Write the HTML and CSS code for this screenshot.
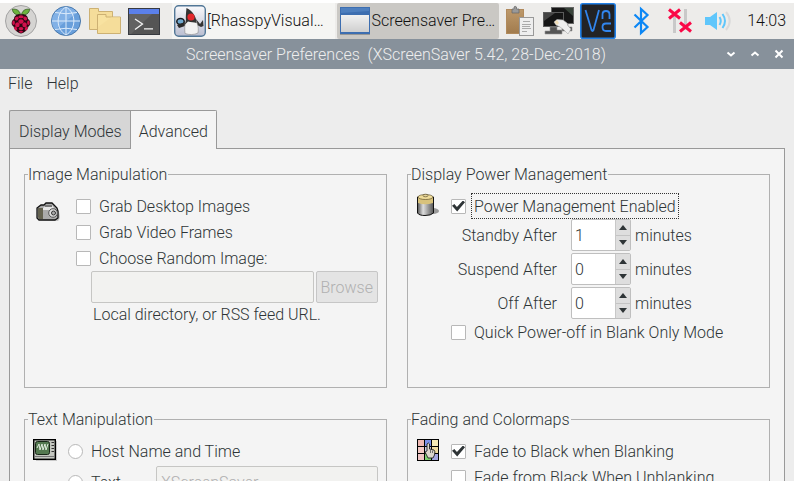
FILE: index.html
```
<!DOCTYPE html>
<html lang="en">
<head>
  <meta charset="UTF-8">
  <title>Screensaver Preferences</title>
  <meta name="viewport" content="width=device-width, initial-scale=1.0">
  <link rel="stylesheet" href="styles.css">
</head>
<body>

  <!-- desktop panel -->
  <header class="taskbar">
    <div class="launchers">
      <button class="launcher menu-launcher" aria-label="Menu">
        <svg width="32" height="32" viewBox="0 0 32 32">
          <circle cx="16" cy="16" r="15.5" fill="#d5d4d2" stroke="#a3a3a3"/>
          <path d="M15.5 9.5C14 4 10 4 7.300 4.300C8 8.500 11 10.500 15.500 9.500ZM16.500 9.500C18 4 22 4 24.700 4.300C24 8.500 21 10.500 16.500 9.500Z" fill="#6cb33e" stroke="#31591d" stroke-width=".8"/>
          <path d="M16 9.500C20 8.500 23 11 23 14C26 16 26 20 23.500 21.500C22.500 25 19 28 16 28.500C13 28 9.500 25 8.500 21.500C6 20 6 16 9 14C9 11 12 8.500 16 9.500Z" fill="#2b0712"/>
          <g fill="#d0104c">
            <ellipse cx="16" cy="11.800" rx="2.700" ry="1.500"/>
            <ellipse cx="11.700" cy="13.500" rx="2.100" ry="1.700" transform="rotate(-35 11.700 13.500)"/>
            <ellipse cx="20.300" cy="13.500" rx="2.100" ry="1.700" transform="rotate(35 20.300 13.500)"/>
            <ellipse cx="16" cy="16.500" rx="2.600" ry="2.300"/>
            <ellipse cx="8.600" cy="17.800" rx="1.300" ry="2.300"/>
            <ellipse cx="23.400" cy="17.800" rx="1.300" ry="2.300"/>
            <ellipse cx="12.400" cy="19.800" rx="2.300" ry="2.500"/>
            <ellipse cx="19.600" cy="19.800" rx="2.300" ry="2.500"/>
            <ellipse cx="10.700" cy="23.500" rx="1.400" ry="2" transform="rotate(-30 10.700 23.500)"/>
            <ellipse cx="21.300" cy="23.500" rx="1.400" ry="2" transform="rotate(30 21.300 23.500)"/>
            <ellipse cx="16" cy="23.600" rx="2.400" ry="1.700"/>
            <ellipse cx="16" cy="26.800" rx="2" ry="1"/>
          </g>
        </svg>
      </button>
      <button class="launcher" aria-label="Web Browser">
        <svg width="32" height="32" viewBox="0 0 32 32">
          <circle cx="16" cy="16" r="14.500" fill="#699fdb" stroke="#4877aa"/>
          <path d="M1.800 16A14.200 14.200 0 0 1 27 7.500L5 25A14 14 0 0 1 1.800 16Z" fill="#82b1e6"/>
          <path d="M16 2V30M2 16H30M5 7.500Q16 10 27 7.500M5 24.500Q16 22 27 24.500M16 2C5.500 8 5.500 24 16 30M16 2C26.500 8 26.500 24 16 30" fill="none" stroke="#dcebfb" stroke-width="1"/>
        </svg>
      </button>
      <button class="launcher" aria-label="File Manager">
        <svg width="32" height="32" viewBox="0 0 32 32">
          <path d="M.5 3.500H9.500V6.500H23.500V24.500H.5Z" fill="#f5dd9a" stroke="#cdb173"/>
          <path d="M8.500 9.500H17V12H31.500V28.500H8.500Z" fill="#f8e2a0" stroke="#cdb173"/>
          <path d="M9 28V22L22 12.500H31V28Z" fill="#f5dd9a"/>
        </svg>
      </button>
      <button class="launcher" aria-label="Terminal">
        <svg width="32" height="32" viewBox="0 0 32 32">
          <rect x=".5" y="3.500" width="31" height="26" fill="#555" stroke="#373a40"/>
          <path d="M1 9H24L3 29H1Z" fill="#626262"/>
          <path d="M1 4H31V9H1Z" fill="#5b80ea"/>
          <path d="M7 14L14.500 19L7 24.500M16 23.800H25" fill="none" stroke="#f4f4f4" stroke-width="1.300"/>
        </svg>
      </button>
    </div>

    <div class="tasks">
      <button class="task">
        <svg width="32" height="32" viewBox="0 0 32 32">
          <defs>
            <linearGradient id="java-bg" x2="0" y2="1"><stop stop-color="#fafafc"/><stop offset="1" stop-color="#b9bdd0"/></linearGradient>
          </defs>
          <rect x=".7" y=".7" width="30.600" height="30.600" rx="4" fill="url(#java-bg)" stroke="#527797" stroke-width="1.400"/>
          <ellipse cx="6.500" cy="16.500" rx="3.700" ry="3" fill="#70a9cf" stroke="#171b20" stroke-width="1.500"/>
          <path d="M3 20L11 17L11 21L5 23Z" fill="#2a2a2a"/>
          <path d="M22 14L26 19L29 15L29.500 21L27 22L23 20Z" fill="#333"/>
          <path d="M12 15C10.500 19 10.500 24 11 28.500C15 30 20 30 24 28C25 22 23 17 21 14Z" fill="#f1f1f1" stroke="#888" stroke-width=".6"/>
          <path d="M12.500 3C12 8 11.500 12 12 16L10.500 20L14 16.500C17 17.500 20 17 22.500 18C22.500 12 19 6 12.500 3Z" fill="#333"/>
          <circle cx="17" cy="12" r="3.600" fill="#e3272c"/>
        </svg>
        <span>[RhasspyVisual…</span>
      </button>
      <button class="task active">
        <svg width="32" height="32" viewBox="0 0 32 32">
          <defs>
            <linearGradient id="win-bg" x2="0" y2="1"><stop stop-color="#f1f1f1"/><stop offset="1" stop-color="#cfcfcf"/></linearGradient>
          </defs>
          <rect x="1" y="2" width="30" height="27" fill="#3d6eb0"/>
          <path d="M2 3H30V6L2 8Z" fill="#4e7fbe"/>
          <rect x="2" y="10" width="28" height="17" fill="url(#win-bg)"/>
          <path d="M1 29.500H31" stroke="#777" opacity=".6"/>
        </svg>
        <span>Screensaver Pre…</span>
      </button>
    </div>

    <div class="tray">
      <div class="tray-apps">
        <svg width="32" height="32" viewBox="0 0 32 32">
          <defs>
            <linearGradient id="clip-bg" x2="0" y2="1"><stop stop-color="#bd996b"/><stop offset="1" stop-color="#a17b4d"/></linearGradient>
          </defs>
          <rect x="2.500" y="4.500" width="17" height="24" fill="url(#clip-bg)" stroke="#b18a5c"/>
          <path d="M8 4H10V2Q11 .5 12.500 2V4H15V8H8Z" fill="#999" stroke="#666" stroke-width=".7"/>
          <rect x="15.500" y="12.500" width="14" height="18" fill="#eee" stroke="#999"/>
          <path d="M19 16.500H26M18 19.500H27M18 21.500H26M18 23.500H27M18 26.500H23" stroke="#aaa"/>
        </svg>
        <svg width="32" height="32" viewBox="0 0 32 32">
          <rect x="9.500" y="2.500" width="22" height="16" fill="#161616" stroke="#666"/>
          <path d="M22 3H31V11Z" fill="#38433a"/>
          <rect x="1.500" y="7.500" width="20" height="14" fill="#151515" stroke="#5b5b5b"/>
          <path d="M2 8H13L2 16Z" fill="#444"/>
          <path d="M8 22H15V25H20V29H3V26H8ZM20 19H26V22H30V26H20Z" fill="#555" stroke="#999" stroke-width=".6"/>
          <path d="M12 17L15 14.500L21 15L25 18L26 21L29 24L26 29L22 25L18 22L14 20Z" fill="#efefef" stroke="#aaa" stroke-width=".6"/>
          <path d="M12.500 17L15 15L17 18L15 20Z" fill="#f2dfb8"/>
        </svg>
        <svg width="36" height="36" viewBox="0 0 36 36">
          <rect x=".8" y=".8" width="34.400" height="34.400" rx="2" fill="#222326" stroke="#207fe5" stroke-width="1.600"/>
          <path d="M5.500 7L11.500 27Q12.500 29 13.500 27L19 7M22.500 16V11.500Q22.500 8 26 8Q29.500 8 29.500 11.500V16M31 20.500H26Q22.500 20.500 22.500 24Q22.500 28 26 28H31" fill="none" stroke="#3185ee" stroke-width="1.800"/>
        </svg>
      </div>
      <div class="tray-status">
        <svg width="32" height="32" viewBox="0 0 32 32">
          <path d="M9.500 9.500L22.500 22L16 28V4L22.500 10L9.500 22.500" fill="none" stroke="#0c87f5" stroke-width="2.200"/>
        </svg>
        <svg width="32" height="32" viewBox="0 0 32 32">
          <path d="M10.500 9V28M21.500 4V22" stroke="#c9c9c9" stroke-width="3"/>
          <path d="M5 4.500L16 13.500M16 4.500L5 13.500M16 17.500L27 26.500M27 17.500L16 26.500" stroke="#fa0846" stroke-width="3"/>
        </svg>
        <svg width="32" height="32" viewBox="0 0 32 32">
          <path d="M2 12H7L14 7V25L7 20H2Z" fill="#5fc6fb"/>
          <path d="M16.500 12Q19 16 16.500 20M19.500 9Q24.500 16 19.500 23" fill="none" stroke="#5fc6fb" stroke-width="2"/>
          <path d="M23 7Q30.500 16 23 25" fill="none" stroke="#dadada" stroke-width="2"/>
        </svg>
      </div>
      <time class="clock">14:03</time>
    </div>
  </header>

  <div class="titlebar">
    <h1>Screensaver Preferences&nbsp; (XScreenSaver 5.42, 28-Dec-2018)</h1>
    <div class="window-buttons">
      <button aria-label="Minimise"><svg width="10" height="10" viewBox="0 0 10 10"><path d="M1.500 3.500L5 6.500L8.500 3.500"/></svg></button>
      <button aria-label="Maximise"><svg width="10" height="10" viewBox="0 0 10 10"><path d="M1.500 6.500L5 3.500L8.500 6.500"/></svg></button>
      <button aria-label="Close"><svg width="10" height="10" viewBox="0 0 10 10"><path d="M1.500 1.500L8.500 8.500M8.500 1.500L1.500 8.500"/></svg></button>
    </div>
  </div>

  <nav class="menubar">
    <a href="#">File</a>
    <a href="#">Help</a>
  </nav>

  <main class="notebook">
    <div class="tabs" role="tablist">
      <button class="tab" role="tab">Display Modes</button>
      <button class="tab selected" role="tab" aria-selected="true">Advanced</button>
    </div>

    <div class="page">
      <fieldset>
        <legend>Image Manipulation</legend>
        <div class="group wide-group">
          <!-- camera -->
          <svg class="group-icon" width="24" height="24" viewBox="0 0 24 24">
            <path d="M4 20L22 21Q25 19 23 12L20 8" fill="#aaa" opacity=".7"/>
            <path d="M1 8L5 5H8L10 3H16L18 5L21 8L22 11V18L19 20H3L1 18Z" fill="#aaa" stroke="#111" stroke-width="1.300"/>
            <path d="M2 8H7V19H3L2 17Z" fill="#646250"/>
            <path d="M7 8L11 5H16L18 8V10H7Z" fill="#e6e6e6"/>
            <path d="M9 5H16V7H9Z" fill="#777"/>
            <circle cx="17" cy="13" r="4.300" fill="#ddd" stroke="#555"/>
            <circle cx="17.500" cy="13" r="2" fill="#aaa" stroke="#333"/>
          </svg>
          <div class="controls">
            <label class="option"><input type="checkbox"><span>Grab Desktop Images</span></label>
            <label class="option"><input type="checkbox"><span>Grab Video Frames</span></label>
            <label class="option"><input type="checkbox"><span>Choose Random Image:</span></label>
            <div class="file-row">
              <input class="entry" type="text" aria-label="Image directory" disabled>
              <button class="browse" disabled>Browse</button>
            </div>
            <p class="hint">Local directory, or RSS feed URL.</p>
          </div>
        </div>
      </fieldset>

      <fieldset>
        <legend>Display Power Management</legend>
        <div class="group">
          <!-- battery -->
          <svg class="group-icon" width="24" height="24" viewBox="0 0 24 24">
            <defs>
              <linearGradient id="cell"><stop stop-color="#555"/><stop offset=".35" stop-color="#ddd"/><stop offset="1" stop-color="#555"/></linearGradient>
            </defs>
            <ellipse cx="17" cy="18" rx="6" ry="3" fill="#999"/>
            <path d="M1.500 4V20Q3 22.500 9 22.500Q15 22.500 17.500 20V4Z" fill="url(#cell)" stroke="#111"/>
            <path d="M2 4V10Q9 12.500 17 10V4Q9 -1 2 4Z" fill="#d8c27c"/>
            <ellipse cx="9.500" cy="4" rx="7.500" ry="2.500" fill="#efdc9a" stroke="#4c4021" stroke-width=".6"/>
            <ellipse cx="9.500" cy="2.500" rx="2.500" ry="1.300" fill="#e5d49a" stroke="#4c4021" stroke-width=".6"/>
          </svg>
          <div class="controls">
            <label class="option"><input type="checkbox" checked><span class="focused">Power Management Enabled</span></label>
            <div class="timers">
              <label for="standby">Standby After</label>
              <div class="spin">
                <input id="standby" type="text" value="1">
                <div class="steppers">
                  <button aria-label="More"><i class="up"></i></button>
                  <button aria-label="Less"><i class="down"></i></button>
                </div>
              </div>
              <span>minutes</span>

              <label for="suspend">Suspend After</label>
              <div class="spin">
                <input id="suspend" type="text" value="0">
                <div class="steppers">
                  <button aria-label="More"><i class="up"></i></button>
                  <button aria-label="Less"><i class="down"></i></button>
                </div>
              </div>
              <span>minutes</span>

              <label for="off">Off After</label>
              <div class="spin">
                <input id="off" type="text" value="0">
                <div class="steppers">
                  <button aria-label="More"><i class="up"></i></button>
                  <button aria-label="Less"><i class="down"></i></button>
                </div>
              </div>
              <span>minutes</span>
            </div>
            <label class="option"><input type="checkbox"><span>Quick Power-off in Blank Only Mode</span></label>
          </div>
        </div>
      </fieldset>

      <fieldset>
        <legend>Text Manipulation</legend>
        <div class="group">
          <!-- television -->
          <svg class="group-icon" width="24" height="24" viewBox="0 0 24 24">
            <path d="M3 3H24V23H3Z" fill="#aaa" opacity=".6"/>
            <rect x=".7" y="1.700" width="21.600" height="19.600" fill="#c4c7c0" stroke="#000" stroke-width="1.400"/>
            <rect x="2.500" y="3.500" width="14" height="13" rx="2" fill="#547950" stroke="#182717"/>
            <path d="M4 10L6 6L7 12L9 6L10 12L12 6L13 12L15 6" fill="none" stroke="#dfeadc"/>
            <path d="M18.500 4.500H21M18.500 7.500H21M18.500 10.500H21M18.500 13.500H21" stroke="#333"/>
            <path d="M2 18.500H21" stroke="#777"/>
          </svg>
          <div class="controls">
            <label class="option"><input type="radio" name="text"><span>Host Name and Time</span></label>
            <div class="text-row">
              <label class="option"><input type="radio" name="text"><span>Text</span></label>
              <input class="entry" type="text" aria-label="Text" value="XScreenSaver" disabled>
            </div>
          </div>
        </div>
      </fieldset>

      <fieldset>
        <legend>Fading and Colormaps</legend>
        <div class="group">
          <!-- colour cells with a hand -->
          <svg class="group-icon" width="24" height="24" viewBox="0 0 24 24">
            <rect x="1" y="1" width="22" height="22" fill="#000"/>
            <path d="M2 2H8V8H2Z" fill="#efb9b3"/>
            <path d="M9 2H15V8H9Z" fill="#7b90e8"/>
            <path d="M16 2H22V8H16Z" fill="#f5e9b6"/>
            <path d="M2 9H8V15H2Z" fill="#f3c9c4"/>
            <path d="M9 9H15V15H9Z" fill="#c9cbe0"/>
            <path d="M16 9H22V15H16Z" fill="#f0dba0"/>
            <path d="M2 16H8V22H2Z" fill="#efc4c4"/>
            <path d="M9 16H15V22H9Z" fill="#7fd070"/>
            <path d="M16 16H22V22H16Z" fill="#a4a6e0"/>
            <path d="M11 6Q12.500 4 13.500 6V11L18 12Q19.500 13 18.500 17L17 20H12L9 14L11 13Z" fill="#dcd6cc" stroke="#222" stroke-width=".9"/>
            <path d="M14.500 12V15M16.500 12.500V15" stroke="#555" stroke-width=".8"/>
          </svg>
          <div class="controls">
            <label class="option"><input type="checkbox" checked><span>Fade to Black when Blanking</span></label>
            <label class="option"><input type="checkbox"><span>Fade from Black When Unblanking</span></label>
          </div>
        </div>
      </fieldset>
    </div>
  </main>

</body>
</html>
```
FILE: styles.css
```
* {
  box-sizing: border-box;
}

body {
  margin: 0;
  height: 100vh;
  overflow: hidden;
  border-top: 3px solid #fff;
  background: #ededed;
  color: #2e3436;
  font: 300 16px/20px Roboto, sans-serif;
}

button, input {
  margin: 0;
  padding: 0;
  border: 0;
  background: none;
  color: inherit;
  font: inherit;
}

svg {
  display: block;
  flex: none;
}

/* panel */
.taskbar {
  display: flex;
  height: 36px;
  padding: 0 8px 0 5px;
  background: #edecea;
  color: #111;
}

.launchers, .tray, .tray-apps, .tray-status {
  display: flex;
  align-items: center;
}

.launchers {
  gap: 7px;
  margin-right: 12px;
}

.menu-launcher {
  margin-right: 6px;
}

.tasks {
  display: flex;
  flex: 1;
  gap: 2px;
}

.task {
  display: flex;
  flex: 1;
  align-items: center;
  gap: 1px;
  min-width: 0;
  padding-left: 2px;
  background: #f5f5f3;
  white-space: nowrap;
}

.task.active {
  background: #cac8c4;
  border-radius: 2px;
}

.tray {
  margin-left: 5px;
}

.tray-apps {
  gap: 6px;
  margin-right: 9px;
}

.tray-status {
  gap: 7px;
  margin-right: 12px;
}

/* title bar */
.titlebar {
  display: flex;
  align-items: center;
  height: 30px;
  padding-right: 10px;
  background: #87919b;
  color: #eee;
}

h1 {
  flex: 1;
  margin: 0;
  padding: 2px 0 0 66px;
  font: inherit;
  text-align: center;
}

.window-buttons {
  display: flex;
  gap: 14px;
}

.window-buttons svg {
  fill: none;
  stroke: #fff;
  stroke-width: 2;
}

.menubar {
  display: flex;
  gap: 14px;
  padding: 5px 8px 4px;
}

.menubar a {
  color: inherit;
  text-decoration: none;
}

/* notebook */
.notebook {
  margin: 12px 9px 0;
}

.tabs {
  display: flex;
}

.tab {
  height: 39px;
  padding: 4px 8px 0 9px;
  border: 1px solid #999;
  border-right: 0;
  border-radius: 2px 0 0 0;
  background: #d6d6d6;
}

.tab.selected {
  z-index: 1;
  padding: 3px 8px 0;
  border-right: 1px solid #999;
  border-bottom: 0;
  border-radius: 0 2px 0 0;
  background: #f4f4f4;
}

.page {
  display: grid;
  grid-template-columns: 1fr 1fr;
  gap: 20px;
  margin-top: -1px;
  padding: 14px;
  border: 1px solid #999;
  background: #f4f4f4;
}

fieldset {
  min-width: 0;
  min-height: 225px;
  margin: 0;
  padding: 8px 8px 0;
  border: 1px solid #b0b0b0;
}

legend {
  margin-left: -5px;
  padding: 2px 1px 0 0;
}

.group {
  display: flex;
  gap: 11px;
}

.wide-group .group-icon {
  margin: 7px 5px 0 3px;
}

.controls {
  flex: 1;
  min-width: 0;
}

.option {
  display: flex;
  align-items: center;
  gap: 6px;
  height: 26px;
}

.option span {
  padding: 3px 2px 1px;
}

.option .focused {
  outline: 1px dotted #333;
}

input[type="checkbox"], input[type="radio"] {
  appearance: none;
  display: grid;
  place-items: center;
  flex: none;
  width: 15px;
  height: 15px;
  border: 1px solid #b8b8b8;
  border-radius: 1px;
  background: #fff;
}

input[type="radio"] {
  border-radius: 50%;
}

input[type="checkbox"]:checked::after {
  content: "";
  width: 13px;
  height: 11px;
  background: #2e3436;
  clip-path: polygon(0 47%, 18% 32%, 38% 58%, 84% 0, 100% 16%, 40% 100%);
}

.file-row {
  display: flex;
  gap: 2px;
  padding-left: 15px;
}

.entry {
  flex: 1;
  min-width: 0;
  height: 32px;
  padding: 1px 4px 0;
  border: 1px solid #c6c6c4;
  border-radius: 2px;
  background: #f2f2f0;
}

.entry:disabled, .browse:disabled {
  color: #b0b0b0;
}

.browse {
  padding: 1px 4px 0;
  border: 1px solid #c6c6c6;
  border-radius: 2px;
  background: #e4e4e4;
}

.hint {
  margin: 2px 0 0 17px;
}

.timers {
  display: grid;
  grid-template-columns: 106px 70px 1fr;
  align-items: center;
  gap: 2px 4px;
}

.timers label, .timers > span {
  padding-top: 2px;
}

.timers label {
  text-align: right;
}

.spin {
  display: flex;
  height: 32px;
  margin-left: 10px;
  border: 1px solid #bfbfbf;
  border-radius: 2px;
  background: #fff;
}

.spin input {
  flex: 1;
  min-width: 0;
  padding: 1px 3px 0;
}

.steppers {
  display: flex;
  flex-direction: column;
  width: 15px;
  border-left: 1px solid #c8c8c8;
  background: #dedede;
}

.steppers button {
  display: grid;
  place-items: center;
  flex: 1;
}

.steppers button + button {
  border-top: 1px solid #c4c4c4;
}

.up, .down {
  border: 4px solid transparent;
  border-top-width: 0;
  border-bottom: 5px solid #2e3436;
}

.down {
  border-top: 5px solid #2e3436;
  border-bottom: 0;
}

.text-row {
  display: flex;
  align-items: center;
  gap: 33px;
  padding-top: 2px;
}
```
